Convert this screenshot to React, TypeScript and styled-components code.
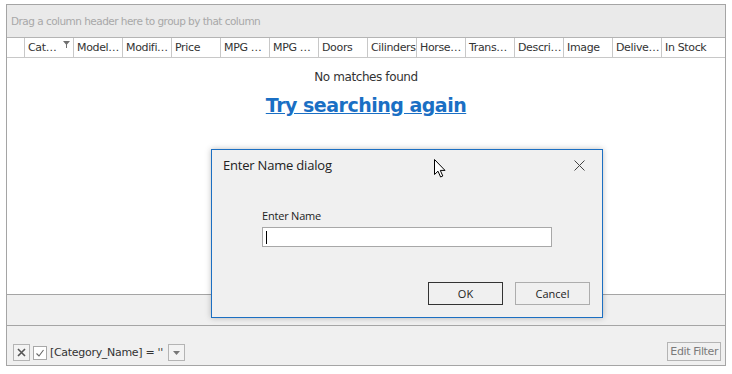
import React from "react";
import styled, { createGlobalStyle } from "styled-components";

const GlobalStyle = createGlobalStyle`
  html, body {
    margin: 0;
    padding: 0;
    background: #ffffff;
  }
  body {
    font-family: "DejaVu Sans", sans-serif;
  }
`;

const columns = [
  "Cat…",
  "Model…",
  "Modifi…",
  "Price",
  "MPG …",
  "MPG …",
  "Doors",
  "Cilinders",
  "Horse…",
  "Trans…",
  "Descri…",
  "Image",
  "Delive…",
  "In Stock",
];

const Page = styled.div`
  position: relative;
  width: 732px;
  height: 374px;
  padding: 4px 6px 0 6px;
  box-sizing: border-box;
`;

const Grid = styled.div`
  width: 720px;
  height: 362px;
  box-sizing: border-box;
  border: 1px solid #a5a5a5;
  display: flex;
  flex-direction: column;
  background: #f0f0f0;
`;

const GroupPanel = styled.div`
  height: 32px;
  background: #eaeaea;
  border-bottom: 1px solid #b4b4b4;
  color: #a8a8a8;
  font-size: 10.5px;
  display: flex;
  align-items: center;
  padding-left: 4px;
  flex-shrink: 0;
  letter-spacing: -0.53px;
`;

const HeaderRow = styled.div`
  height: 19px;
  display: flex;
  background: #ffffff;
  border-bottom: 1px solid #c8c8c8;
  flex-shrink: 0;
`;

const Indicator = styled.div`
  width: 17px;
  border-right: 1px solid #c8c8c8;
  flex-shrink: 0;
`;

const HeaderCell = styled.div<{ $last?: boolean }>`
  width: ${(p) => (p.$last ? "auto" : "49px")};
  flex: ${(p) => (p.$last ? "1" : "none")};
  border-right: ${(p) => (p.$last ? "none" : "1px solid #c8c8c8")};
  font-size: 11px;
  color: #333333;
  display: flex;
  align-items: center;
  justify-content: space-between;
  padding: 0 3px 0 3px;
  box-sizing: border-box;
  white-space: nowrap;
  overflow: hidden;
  letter-spacing: -0.35px;
`;

const FilterGlyph = styled.svg`
  align-self: flex-start;
  margin-top: 3px;
  flex-shrink: 0;
`;

const DataArea = styled.div`
  flex: 1;
  background: #ffffff;
  display: flex;
  flex-direction: column;
  align-items: center;
  padding-top: 12px;
`;

const NoMatch = styled.div`
  font-size: 12px;
  color: #333333;
  letter-spacing: -0.4px;
`;

const TryAgain = styled.a`
  margin-top: 10px;
  font-family: "DejaVu Sans", sans-serif;
  font-weight: bold;
  font-size: 19px;
  color: #1a6fc4;
  text-decoration: underline;
  letter-spacing: -0.5px;
  cursor: pointer;
`;

const FooterBand = styled.div`
  height: 30px;
  border-top: 1px solid #a5a5a5;
  background: #f0f0f0;
  flex-shrink: 0;
`;

const FilterPanel = styled.div`
  height: 40px;
  border-top: 1px solid #a5a5a5;
  background: #f0f0f0;
  display: flex;
  align-items: flex-end;
  padding: 0 4px 4px 6px;
  box-sizing: border-box;
  flex-shrink: 0;
  gap: 3px;
`;

const SquareButton = styled.div`
  width: 17px;
  height: 17px;
  box-sizing: border-box;
  border: 1px solid #b4b4b4;
  background: #f3f3f3;
  display: flex;
  align-items: center;
  justify-content: center;
`;

const CheckBox = styled.div`
  width: 14px;
  height: 14px;
  margin-bottom: 1px;
  box-sizing: border-box;
  border: 1px solid #a8a8a8;
  background: #ffffff;
  display: flex;
  align-items: center;
  justify-content: center;
`;

const FilterText = styled.span`
  font-size: 11px;
  color: #333;
  line-height: 17px;
  letter-spacing: -0.3px;
  margin-right: 2px;
`;

const Spacer = styled.div`
  flex: 1;
`;

const EditFilter = styled.div`
  height: 19px;
  box-sizing: border-box;
  border: 1px solid #b4b4b4;
  font-size: 11px;
  color: #7a7a7a;
  padding: 0 2px;
  display: flex;
  align-items: center;
  letter-spacing: -0.4px;
`;

const Dialog = styled.div`
  position: absolute;
  left: 211px;
  top: 149px;
  width: 392px;
  height: 169px;
  box-sizing: border-box;
  border: 1px solid #1c6fc2;
  background: #f0f0f0;
  box-shadow: 0 0 6px rgba(0, 0, 0, 0.25);
  font-family: "Open Sans", sans-serif;
  display: flex;
  flex-direction: column;
`;

const TitleBar = styled.div`
  height: 30px;
  display: flex;
  align-items: center;
  justify-content: space-between;
  padding: 0 17px 0 11px;
`;

const Title = styled.span`
  font-size: 13px;
  color: #222;
  letter-spacing: -0.2px;
`;

const DialogBody = styled.div`
  flex: 1;
  padding: 28px 0 0 50px;
  display: flex;
  flex-direction: column;
`;

const Label = styled.label`
  font-size: 11px;
  color: #222;
  letter-spacing: -0.2px;
`;

const NameInput = styled.div`
  margin-top: 4px;
  width: 290px;
  height: 20px;
  box-sizing: border-box;
  border: 1px solid #a8a8a8;
  background: #fff;
  display: flex;
  align-items: center;
  padding-left: 3px;
`;

const Caret = styled.div`
  width: 1px;
  height: 13px;
  background: #000;
`;

const Buttons = styled.div`
  display: flex;
  justify-content: flex-end;
  gap: 12px;
  padding: 0 12px 12px 0;
`;

const DialogButton = styled.div<{ $primary?: boolean }>`
  width: 75px;
  height: 23px;
  box-sizing: border-box;
  border: 1px solid ${(p) => (p.$primary ? "#333" : "#adadad")};
  background: #f0f0f0;
  font-size: 11px;
  color: #222;
  display: flex;
  align-items: center;
  justify-content: center;
`;

const Pointer = styled.svg`
  position: absolute;
  left: 434px;
  top: 159px;
`;

export default function App() {
  return (
    <>
      <GlobalStyle />
      <Page>
        <Grid>
          <GroupPanel>Drag a column header here to group by that column</GroupPanel>
          <HeaderRow>
            <Indicator />
            {columns.map((c, i) => (
              <HeaderCell key={i} $last={i === columns.length - 1}>
                <span>{c}</span>
                {i === 0 && (
                  <FilterGlyph width="7" height="7" viewBox="0 0 7 7">
                    <path d="M0 0 H7 L4 3.5 V7 H3 V3.5 Z" fill="#707070" />
                  </FilterGlyph>
                )}
              </HeaderCell>
            ))}
          </HeaderRow>
          <DataArea>
            <NoMatch>No matches found</NoMatch>
            <TryAgain>Try searching again</TryAgain>
          </DataArea>
          <FooterBand />
          <FilterPanel>
            <SquareButton>
              <svg width="9" height="9" viewBox="0 0 9 9">
                <path d="M1 1 L8 8 M8 1 L1 8" stroke="#555" strokeWidth="1.6" />
              </svg>
            </SquareButton>
            <CheckBox>
              <svg width="10" height="10" viewBox="0 0 10 10">
                <path d="M1.5 5.5 L4 8 L8.5 2" stroke="#666" strokeWidth="1.1" fill="none" />
              </svg>
            </CheckBox>
            <FilterText>[Category_Name] = ''</FilterText>
            <SquareButton>
              <svg width="7" height="4" viewBox="0 0 7 4">
                <path d="M0 0 L7 0 L3.5 4 Z" fill="#777" />
              </svg>
            </SquareButton>
            <Spacer />
            <EditFilter>Edit Filter</EditFilter>
          </FilterPanel>
        </Grid>

        <Dialog>
          <TitleBar>
            <Title>Enter Name dialog</Title>
            <svg width="11" height="11" viewBox="0 0 11 11">
              <path d="M0.5 0.5 L10.5 10.5 M10.5 0.5 L0.5 10.5" stroke="#444" strokeWidth="1" />
            </svg>
          </TitleBar>
          <DialogBody>
            <Label>Enter Name</Label>
            <NameInput>
              <Caret />
            </NameInput>
          </DialogBody>
          <Buttons>
            <DialogButton $primary>OK</DialogButton>
            <DialogButton>Cancel</DialogButton>
          </Buttons>
        </Dialog>

        <Pointer width="12" height="19" viewBox="0 0 12 19">
          <path
            d="M0.5 0.5 L0.5 15.5 L4 12.2 L6.6 18 L8.8 17 L6.3 11.4 L11 11.4 Z"
            fill="#fff"
            stroke="#000"
            strokeWidth="1"
            strokeLinejoin="round"
          />
        </Pointer>
      </Page>
    </>
  );
}
